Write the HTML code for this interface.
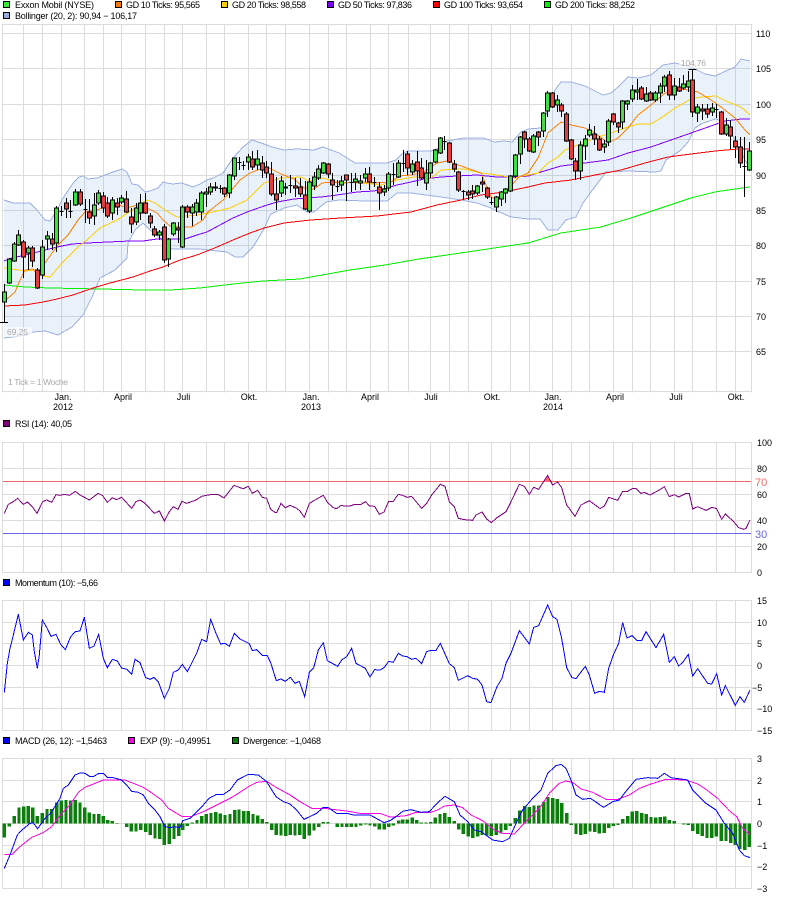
<!DOCTYPE html>
<html><head><meta charset="utf-8"><title>Exxon Mobil Chart</title>
<style>
html,body{margin:0;padding:0;background:#fff}
svg{display:block}
text{font-family:"Liberation Sans",Arial,sans-serif;font-size:9px;fill:#000}
.g{fill:#a8a8a8;font-size:8.5px}
polyline{fill:none}
</style></head><body>
<svg width="792" height="898" viewBox="0 0 792 898" xmlns="http://www.w3.org/2000/svg">
<rect width="792" height="898" fill="#fff"/>
<defs><path id="v" vector-effect="non-scaling-stroke" d="M2.5 0v1M23.5 0v1M42.5 0v1M61.5 0v1M84.5 0v1M103.5 0v1M121.5 0v1M145.5 0v1M164.5 0v1M182.5 0v1M206.5 0v1M224.5 0v1M248.5 0v1M266.5 0v1M285.5 0v1M309.5 0v1M328.5 0v1M346.5 0v1M370.5 0v1M388.5 0v1M408.5 0v1M430.5 0v1M449.5 0v1M468.5 0v1M491.5 0v1M510.5 0v1M529.5 0v1M552.5 0v1M571.5 0v1M589.5 0v1M613.5 0v1M632.5 0v1M650.5 0v1M674.5 0v1M692.5 0v1M716.5 0v1M735.5 0v1M751.5 0v1"/></defs>

<!-- grids -->
<g stroke="#dcdcdc" stroke-width="1" fill="none">
<use href="#v" transform="translate(0,24.5) scale(1,368)"/>
<use href="#v" transform="translate(0,442.5) scale(1,130)"/>
<use href="#v" transform="translate(0,600.5) scale(1,130)"/>
<use href="#v" transform="translate(0,758.5) scale(1,130)"/>
<path d="M2 24.5H752M2 33.5H752M2 68.5H752M2 104.5H752M2 139.5H752M2 175.5H752M2 210.5H752M2 245.5H752M2 281.5H752M2 316.5H752M2 351.5H752M2 391.5H752"/>
<path d="M2 442.5H752M2 468.5H752M2 494.5H752M2 520.5H752M2 546.5H752M2 572.5H752"/>
<path d="M2 600.5H752M2 622.5H752M2 643.5H752M2 665.5H752M2 687.5H752M2 708.5H752M2 730.5H752"/>
<path d="M2 758.5H752M2 780.5H752M2 801.5H752M2 823.5H752M2 845.5H752M2 866.5H752M2 888.5H752"/>
</g>

<!-- Bollinger fill -->
<polygon fill="#6ea0e6" fill-opacity=".15" points="4,200 13,203 23,203 30,203 37,210 45,220 50,221 57,210 62,200 67,192 74,182 79,177 83,176 88,179 97,178 105,175 113,172 122,169 127,172 132,184 138,185 145,192 150,191 158,188 163,182 167,183 173,184 182,183 193,187 200,184 207,180 213,178 223,173 233,158 243,147 252,140 264,144 272,147 284,150 297,149 314,150 323,147 331,150 339,153 347,158 355,163 387,163 396,160 402,154 407,151 431,151 437,149 447,141 464,138 484,138 494,142 504,141 512,142 521,132 528,129 541,128 546,115 551,100 555,90 561,82 571,82 585,86 603,95 611,93 618,87 628,77 638,78 651,75 663,65 675,63 691,67 705,74 715,76 728,70 735,67 741,59 750,61 750,168 745,160 740,150 735,140 730,131 723,121 715,119 701,124 695,128 688,142 681,150 666,160 661,171 655,172 628,171 606,172 600,180 591,192 583,203 576,217 566,220 558,230 548,230 540,219 528,219 511,217 497,211 491,208 477,203 461,200 441,197 411,193 397,193 387,201 364,201 339,200 326,202 314,212 307,212 297,205 284,208 271,214 267,222 264,229 253,247 243,257 235,257 227,252 217,251 200,249 185,249 172,249 167,245 160,238 150,230 143,223 135,230 128,243 127,258 115,270 100,278 92,297 83,315 72,327 58,335 45,331 33,332 27,335 13,337 4,338"/>
<g stroke="#9cb0e0" stroke-width="1" shape-rendering="crispEdges">
<polyline points="4,200 13,203 23,203 30,203 37,210 45,220 50,221 57,210 62,200 67,192 74,182 79,177 83,176 88,179 97,178 105,175 113,172 122,169 127,172 132,184 138,185 145,192 150,191 158,188 163,182 167,183 173,184 182,183 193,187 200,184 207,180 213,178 223,173 233,158 243,147 252,140 264,144 272,147 284,150 297,149 314,150 323,147 331,150 339,153 347,158 355,163 387,163 396,160 402,154 407,151 431,151 437,149 447,141 464,138 484,138 494,142 504,141 512,142 521,132 528,129 541,128 546,115 551,100 555,90 561,82 571,82 585,86 603,95 611,93 618,87 628,77 638,78 651,75 663,65 675,63 691,67 705,74 715,76 728,70 735,67 741,59 750,61"/>
<polyline points="4,338 13,337 27,335 33,332 45,331 58,335 72,327 83,315 92,297 100,278 115,270 127,258 128,243 135,230 143,223 150,230 160,238 167,245 172,249 185,249 200,249 217,251 227,252 235,257 243,257 253,247 264,229 267,222 271,214 284,208 297,205 307,212 314,212 326,202 339,200 364,201 387,201 397,193 411,193 441,197 461,200 477,203 491,208 497,211 511,217 528,219 540,219 548,230 558,230 566,220 576,217 583,203 591,192 600,180 606,172 628,171 655,172 661,171 666,160 681,150 688,142 695,128 701,124 715,119 723,121 730,131 735,140 740,150 745,160 750,168"/>
</g>

<!-- moving averages -->
<g stroke-width="1" shape-rendering="crispEdges">
<polyline stroke="#00f000" points="4,285 25,287 50,288 100,289 143,290 170,290 200,288 233,284 263,281 300,279 350,270 385,265 419,259 447,255 481,250 528,243 561,233 601,227 631,218 661,208 691,198 715,192 735,189 750,187"/>
<polyline stroke="#ff0000" points="4,306 25,305 43,302 57,299 73,295 93,288 110,283 133,277 150,271 163,267 180,260 197,255 217,247 233,240 250,233 264,228 284,223 311,220 341,218 377,216 411,212 437,205 461,200 481,195 504,192 528,187 545,183 571,180 595,175 621,170 645,163 668,157 691,154 715,151 738,149 750,149"/>
<polyline stroke="#8000ff" points="4,261 12,258 30,254 45,250 57,247 72,244 87,243 108,242 130,241 143,241 157,239 167,239 185,239 197,235 207,232 220,225 233,218 247,212 264,206 277,202 294,199 306,198 321,197 337,195 357,192 374,191 387,188 397,185 411,182 424,179 441,177 457,176 477,175 497,177 517,177 528,176 541,172 561,166 585,163 608,160 628,153 651,147 671,140 691,133 708,127 725,121 741,119 750,119"/>
<polyline stroke="#ffcc00" points="4,268 12,269 25,271 35,270 43,276 50,277 62,263 70,255 80,245 87,240 100,228 117,220 132,210 147,200 155,203 165,210 177,217 197,215 213,212 230,208 247,200 264,183 281,178 301,177 309,181 322,178 337,182 361,183 381,185 397,180 414,177 431,178 441,170 464,169 481,173 497,175 514,178 528,175 538,173 548,163 558,157 565,150 573,147 585,142 598,137 611,133 625,128 638,124 651,124 661,118 675,108 691,99 701,97 716,96 728,102 741,107 750,115"/>
<polyline stroke="#ff8000" points="7,299 15,292 20,280 25,270 33,269 38,275 45,263 52,253 58,245 68,235 78,220 85,212 97,210 107,206 117,204 127,208 137,205 147,208 157,213 163,220 170,226 182,227 192,227 203,220 208,212 213,208 223,200 230,192 240,180 250,173 263,168 269,168 281,174 294,179 304,188 314,189 322,183 332,182 344,183 361,182 374,183 391,182 399,176 411,175 424,172 437,163 447,161 464,167 481,173 491,197 497,200 507,190 519,177 528,173 538,158 548,133 555,127 561,122 571,125 585,128 595,133 608,143 618,138 628,128 638,115 651,105 665,93 675,88 688,90 698,92 711,100 721,107 735,118 745,130 750,135"/>
</g>

<!-- wicks + dojis -->
<path stroke="#000" stroke-width="1" fill="none" shape-rendering="crispEdges" d="M4.5 284V322M0 322.5h8M9.5 258V284M14.5 242V262M18.5 230V246M23.5 240V278M28.5 246V270M32.5 246V267M37.5 268V289M42.5 240V279M47.5 231V250M52.5 233V250M56.5 206V252M61.5 206V216M59.5 211.5h4M66.5 198V218M70.5 200V218M68.5 211.5h4M75.5 189V206M80.5 189V206M85.5 199V223M83.5 209.5h4M89.5 199V224M94.5 193V225M98.5 190V205M103.5 192V213M107.5 197V218M112.5 197V220M117.5 198V215M121.5 195V204M126.5 191V213M131.5 208V233M136.5 203V225M140.5 194V220M145.5 193V214M150.5 213V228M154.5 226V237M159.5 230V240M164.5 224V263M168.5 238V267M173.5 222V236M178.5 222V243M182.5 205V248M187.5 205V218M192.5 204V226M196.5 199V216M201.5 191V220M206.5 188V207M210.5 183V195M215.5 182V191M220.5 185V193M218.5 188.5h4M224.5 187V197M229.5 174V198M234.5 158V180M239.5 157V170M237.5 162.5h4M243.5 161V170M241.5 165.5h4M248.5 154V170M252.5 151V170M257.5 150V170M262.5 156V178M266.5 161V178M271.5 162V196M276.5 177V210M281.5 176V197M285.5 183V195M290.5 175V193M288.5 185.5h4M295.5 178V197M300.5 178V197M305.5 181V210M309.5 178V213M314.5 172V190M318.5 165V180M323.5 162V174M328.5 163V178M332.5 173V200M337.5 180V192M335.5 186.5h4M341.5 176V191M346.5 175V201M351.5 173V192M349.5 182.5h4M355.5 173V190M360.5 175V190M365.5 168V182M369.5 167V190M374.5 177V187M372.5 182.5h4M379.5 182V210M384.5 185V196M388.5 172V191M393.5 163V185M391.5 174.5h4M398.5 160V178M403.5 150V172M401.5 163.5h4M407.5 151V175M412.5 160V175M417.5 151V186M421.5 158V180M426.5 160V190M430.5 162V178M435.5 149V163M440.5 137V154M444.5 136V150M442.5 141.5h4M449.5 142V163M454.5 160V172M458.5 171V192M463.5 190V200M461.5 191.5h4M468.5 190V200M472.5 185V199M477.5 185V195M482.5 177V192M487.5 187V199M491.5 197V205M489.5 202.5h4M496.5 196V212M501.5 191V206M505.5 188V203M510.5 175V192M515.5 154V178M520.5 136V164M524.5 131V148M529.5 137V152M533.5 134V153M538.5 131V146M543.5 112V137M547.5 91V117M552.5 92V108M557.5 95V112M561.5 103V117M566.5 112V142M571.5 139V160M575.5 158V180M580.5 141V180M585.5 135V160M589.5 124V137M594.5 126V145M599.5 136V151M604.5 140V153M608.5 119V146M613.5 113V125M618.5 122V133M622.5 100V129M627.5 100V110M632.5 85V102M637.5 79V100M641.5 86V100M646.5 87V102M650.5 91V101M655.5 91V102M660.5 83V103M664.5 75V92M669.5 71V100M674.5 78V100M679.5 78V92M683.5 75V90M688.5 71V92M692.5 69V117M688.5 69.5h8M697.5 104V122M702.5 104V120M707.5 104V118M712.5 103V116M716.5 104V118M714.5 109.5h4M721.5 111V135M726.5 118V136M730.5 120V149M735.5 136V158M740.5 137V168M744.5 137V197M742.5 166.5h4M749.5 142V171"/>

<!-- green bodies -->
<path fill="#3de03d" stroke="#000" stroke-width="1" shape-rendering="crispEdges" d="M2.5 292h4V302h-4zM7.5 259h4V283h-4zM12.5 244h4V261h-4zM16.5 235h4V245h-4zM26.5 248h4V253h-4zM40.5 247h4V275h-4zM45.5 236h4V239h-4zM54.5 208h4V243h-4zM73.5 192h4V205h-4zM92.5 205h4V216h-4zM96.5 193h4V203h-4zM110.5 200h4V213h-4zM119.5 198h4V202h-4zM134.5 208h4V222h-4zM138.5 203h4V213h-4zM157.5 232h4V235h-4zM166.5 239h4V259h-4zM171.5 223h4V234h-4zM180.5 207h4V247h-4zM190.5 207h4V213h-4zM194.5 203h4V212h-4zM199.5 193h4V212h-4zM204.5 192h4V194h-4zM208.5 187h4V192h-4zM213.5 187h4V188h-4zM227.5 175h4V193h-4zM232.5 158h4V176h-4zM246.5 157h4V162h-4zM255.5 159h4V165h-4zM279.5 181h4V193h-4zM307.5 182h4V211h-4zM312.5 177h4V186h-4zM316.5 169h4V178h-4zM321.5 163h4V173h-4zM339.5 181h4V185h-4zM353.5 179h4V182h-4zM358.5 181h4V183h-4zM363.5 174h4V178h-4zM382.5 189h4V192h-4zM386.5 174h4V188h-4zM396.5 163h4V177h-4zM410.5 164h4V172h-4zM424.5 173h4V183h-4zM428.5 163h4V173h-4zM433.5 150h4V162h-4zM438.5 138h4V153h-4zM475.5 186h4V193h-4zM494.5 197h4V207h-4zM499.5 192h4V199h-4zM503.5 189h4V193h-4zM508.5 176h4V191h-4zM513.5 155h4V176h-4zM518.5 137h4V154h-4zM531.5 136h4V152h-4zM541.5 113h4V131h-4zM545.5 93h4V111h-4zM555.5 100h4V105h-4zM578.5 145h4V171h-4zM583.5 139h4V146h-4zM587.5 130h4V135h-4zM602.5 144h4V147h-4zM606.5 121h4V142h-4zM620.5 101h4V122h-4zM625.5 101h4V104h-4zM630.5 90h4V99h-4zM635.5 90h4V92h-4zM644.5 94h4V101h-4zM653.5 93h4V100h-4zM658.5 86h4V93h-4zM662.5 77h4V86h-4zM672.5 86h4V95h-4zM681.5 84h4V88h-4zM686.5 81h4V87h-4zM695.5 107h4V113h-4zM710.5 108h4V112h-4zM724.5 125h4V134h-4zM747.5 151h4V170h-4z"/>

<!-- red bodies -->
<path fill="#e83c3c" stroke="#000" stroke-width="1" shape-rendering="crispEdges" d="M21.5 242h4V257h-4zM30.5 248h4V261h-4zM35.5 270h4V288h-4zM50.5 239h4V244h-4zM64.5 203h4V209h-4zM78.5 192h4V204h-4zM87.5 212h4V218h-4zM101.5 196h4V208h-4zM105.5 203h4V216h-4zM115.5 203h4V207h-4zM124.5 199h4V212h-4zM129.5 217h4V224h-4zM143.5 203h4V213h-4zM148.5 216h4V223h-4zM152.5 229h4V235h-4zM162.5 227h4V260h-4zM176.5 228h4V230h-4zM185.5 207h4V212h-4zM222.5 188h4V194h-4zM250.5 159h4V167h-4zM260.5 163h4V170h-4zM264.5 167h4V173h-4zM269.5 174h4V194h-4zM274.5 194h4V200h-4zM283.5 187h4V188h-4zM293.5 186h4V188h-4zM298.5 187h4V194h-4zM303.5 195h4V209h-4zM326.5 164h4V174h-4zM330.5 180h4V185h-4zM344.5 175h4V180h-4zM367.5 174h4V182h-4zM377.5 187h4V193h-4zM405.5 154h4V168h-4zM415.5 162h4V171h-4zM419.5 168h4V178h-4zM447.5 143h4V162h-4zM452.5 164h4V169h-4zM456.5 172h4V190h-4zM466.5 192h4V195h-4zM470.5 191h4V194h-4zM480.5 182h4V184h-4zM485.5 188h4V197h-4zM522.5 132h4V139h-4zM527.5 139h4V151h-4zM536.5 132h4V137h-4zM550.5 93h4V107h-4zM559.5 105h4V111h-4zM564.5 114h4V141h-4zM569.5 140h4V159h-4zM573.5 161h4V171h-4zM592.5 134h4V139h-4zM597.5 139h4V150h-4zM611.5 114h4V122h-4zM616.5 123h4V127h-4zM639.5 88h4V99h-4zM648.5 93h4V100h-4zM667.5 75h4V95h-4zM677.5 87h4V91h-4zM690.5 80h4V112h-4zM700.5 109h4V111h-4zM705.5 109h4V114h-4zM719.5 112h4V134h-4zM728.5 127h4V136h-4zM733.5 141h4V147h-4zM738.5 147h4V163h-4z"/>

<!-- RSI -->
<g shape-rendering="crispEdges" stroke-width="1">
<path d="M3 481.5H751" stroke="#f06868"/>
<path d="M3 533.5H751" stroke="#6868e8"/>
</g>
<polygon points="544.5,481.5 547.7,475.5 551,481.5" fill="#ff6666"/>
<g transform="translate(0,410) scale(.33333)" stroke="#800080" stroke-width="3" shape-rendering="crispEdges">
<polyline points="13,310 25,283 40,275 53,265 70,283 83,276 97,290 111,310 128,275 140,270 155,277 168,254 180,256 193,253 208,256 226,244 240,255 268,270 295,250 308,257 322,277 337,263 350,269 365,262 395,295 408,275 420,270 435,280 463,310 478,303 493,333 508,305 520,290 534,298 546,274 560,280 588,270 605,259 625,255 640,253 655,254 672,264 702,226 720,233 730,236 745,229 757,250 773,241 787,262 800,265 812,298 825,307 830,308 843,280 856,293 870,286 890,295 900,303 913,322 928,280 945,270 970,256 983,278 1000,293 1010,296 1022,287 1050,288 1065,283 1083,283 1097,275 1108,288 1124,289 1138,313 1152,306 1166,274 1180,274 1188,262"/>
</g>
<g transform="translate(396,410) scale(.33333)" stroke="#800080" stroke-width="3" shape-rendering="crispEdges">
<polyline points="0,262 7,253 20,256 33,262 47,259 77,295 92,280 107,255 133,223 147,229 160,275 175,290 187,325 205,329 230,331 240,315 258,306 272,327 286,338 303,323 330,305 345,275 370,223 385,229 400,253 413,232 428,238 455,196 470,225 485,216 497,233 512,285 537,319 555,285 580,272 612,296 625,288 638,262 665,271 680,244 695,244 710,235 720,235 735,250 745,247 762,255 790,240 805,230 820,260 835,254 848,261 870,250 880,250 890,297 905,290 930,301 948,292 962,296 977,328 988,312 1012,334 1028,353 1043,358 1050,355 1062,330"/>
</g>

<!-- Momentum -->
<g transform="translate(0,575) scale(.33333)" stroke="#0000ff" stroke-width="3" shape-rendering="crispEdges">
<polyline points="13,352 22,265 30,220 40,180 55,118 70,195 85,172 97,180 103,230 112,280 118,240 127,135 140,157 153,184 168,178 182,208 196,224 212,185 226,170 240,168 253,127 268,220 282,213 296,178 310,250 322,278 337,253 352,258 365,279 381,283 395,298 405,253 420,263 437,308 450,313 462,307 475,320 493,370 508,340 520,292 535,285 547,268 562,290 590,235 605,193 620,200 632,133 648,175 662,207 675,205 688,214 703,175 720,192 748,206 757,227 770,224 787,241 802,242 812,263 829,317 842,312 856,319 871,307 885,325 898,319 914,365 928,292 941,279 955,225 970,203 982,257 1013,274 1025,255 1040,245 1055,220 1068,265 1096,280 1110,306 1124,284 1140,285 1152,278 1166,259 1180,262 1188,247"/>
</g>
<g transform="translate(396,575) scale(.33333)" stroke="#0000ff" stroke-width="3" shape-rendering="crispEdges">
<polyline points="0,247 7,235 20,243 33,245 47,253 60,250 77,266 92,230 105,226 120,226 133,205 160,266 175,278 187,316 215,302 230,310 245,313 258,330 272,380 285,383 303,335 318,310 330,265 345,235 370,167 400,207 413,157 428,152 455,90 470,125 483,133 497,190 512,278 528,308 540,311 568,274 580,300 596,355 610,349 625,352 638,280 652,240 668,205 680,143 693,189 708,182 722,196 737,196 750,170 780,218 803,178 820,262 835,245 848,273 862,260 877,238 890,303 905,281 935,325 947,327 962,296 977,360 988,332 1018,391 1032,365 1045,382 1062,345"/>
</g>

<!-- MACD bars -->
<g transform="translate(0,730) scale(.33333)" stroke="#0a800a" stroke-width="9.6" shape-rendering="crispEdges" fill="none">
<path d="M13 280V323M28 280V290M43 280V258M57 280V233M71 280V230M85 280V228M98 280V233M112 280V258M127 280V249M141 280V237M155 280V237M170 280V218M184 280V212M198 280V210M212 280V212M226 280V210M240 280V218M254 280V232M268 280V248M282 280V252M296 280V252M310 280V258M323 280V270M337 280V273M351 280V279M365 280V281M380 280V291M394 280V305M408 280V305M422 280V300M437 280V306M451 280V315M465 280V325M479 280V327M493 280V345M508 280V342M522 280V327M536 280V318M548 280V300M562 280V288M577 280V278M591 280V270M605 280V258M619 280V252M633 280V249M647 280V246M661 280V250M675 280V255M690 280V252M704 280V240M717 280V238M731 280V243M745 280V243M759 280V252M773 280V256M787 280V267M800 280V276M815 280V300M829 280V315M843 280V316M857 280V318M871 280V315M885 280V316M899 280V315M913 280V327M928 280V316M942 280V302M956 280V291M970 280V276M984 280V276M998 280V281M1012 280V291M1026 280V291M1040 280V291M1054 280V291M1068 280V291M1082 280V287M1097 280V284M1110 280V287M1124 280V289M1138 280V298M1153 280V298M1166 280V291M1180 280V287"/>
</g>
<g transform="translate(396,730) scale(.33333)" stroke="#0a800a" stroke-width="9.6" shape-rendering="crispEdges" fill="none">
<path d="M8 280V272M20 280V268M34 280V268M49 280V263M62 280V270M76 280V277M90 280V278M104 280V276M118 280V263M132 280V252M146 280V249M160 280V261M175 280V273M188 280V298M202 280V312M217 280V320M230 280V324M245 280V320M258 280V315M272 280V316M286 280V318M301 280V315M315 280V310M329 280V300M343 280V288M358 280V264M371 280V241M386 280V228M400 280V231M414 280V226M428 280V226M443 280V216M456 280V201M470 280V204M484 280V207M497 280V219M512 280V249M526 280V285M540 280V312M554 280V315M568 280V312M582 280V305M596 280V306M610 280V311M625 280V309M638 280V294M652 280V288M666 280V285M680 280V267M695 280V258M709 280V245M722 280V243M737 280V249M751 280V252M765 280V261M779 280V263M793 280V261M806 280V259M820 280V270M835 280V273M849 280V281M863 280V283M877 280V285M890 280V303M905 280V312M919 280V318M933 280V324M947 280V324M961 280V320M976 280V333M990 280V333M1004 280V339M1018 280V345M1032 280V357M1046 280V360M1060 280V351"/>
</g>
<!-- MACD lines -->
<g transform="translate(0,730) scale(.33333)" stroke-width="3" shape-rendering="crispEdges">
<polyline stroke="#ff00e6" points="13,373 37,373 60,350 95,322 130,308 155,290 185,250 210,225 235,187 255,172 285,160 310,150 340,150 375,150 395,158 430,172 450,185 485,210 505,235 530,250 545,259 575,259 610,245 650,225 690,205 715,190 745,170 770,157 800,154 830,173 870,195 900,215 935,235 980,236 1040,243 1080,250 1140,250 1170,261 1188,260"/>
<polyline stroke="#0000ff" points="13,415 30,375 52,315 66,300 90,280 100,279 113,296 135,265 152,250 180,205 190,175 205,165 225,135 240,129 255,130 270,140 280,140 295,131 310,130 322,142 340,143 365,150 380,165 395,184 415,187 430,195 445,220 465,240 480,260 495,290 510,293 525,290 540,293 548,272 570,265 590,245 610,225 627,205 650,193 670,193 690,180 712,150 745,133 775,135 800,155 828,200 850,215 870,222 890,240 912,268 950,250 970,232 985,233 1010,250 1040,250 1060,255 1110,255 1125,263 1152,278 1170,272 1188,260"/>
</g>
<g transform="translate(396,730) scale(.33333)" stroke-width="3" shape-rendering="crispEdges">
<polyline stroke="#ff00e6" points="0,260 30,257 60,247 105,247 125,240 145,228 175,225 200,233 225,255 260,272 295,300 320,310 355,312 375,290 400,265 430,235 460,190 490,160 510,153 530,157 555,177 590,187 630,208 665,208 700,195 730,175 765,162 810,148 870,150 905,162 930,178 965,205 1000,242 1022,260 1040,295 1062,315"/>
<polyline stroke="#0000ff" points="0,260 20,244 45,239 75,247 100,245 125,218 147,199 175,215 192,255 215,275 235,300 255,305 290,330 320,335 340,325 360,280 380,240 410,205 435,180 455,130 480,107 495,103 510,115 525,150 540,195 560,208 583,205 623,232 650,215 670,210 685,190 720,148 755,143 785,145 805,130 825,143 875,150 890,180 930,220 960,240 985,280 1010,310 1030,360 1045,377 1062,383"/>
</g>

<!-- gray annotations -->
<rect x="5" y="327" width="27" height="10" fill="#fff" fill-opacity=".6"/>
<text class="g" x="7" y="335" textLength="21">69,25</text>
<rect x="679" y="58" width="29" height="10" fill="#fff" fill-opacity=".6"/>
<text class="g" x="681" y="66" textLength="25">104,76</text>
<text class="g" x="8" y="385" textLength="60">1 Tick = 1 Woche</text>

<!-- legends -->
<g stroke="#000" stroke-width="1">
<rect x="3.5" y="1.5" width="6" height="6" fill="#33ee33"/>
<rect x="115.5" y="1.5" width="6" height="6" fill="#ff7700"/>
<rect x="221.5" y="1.5" width="6" height="6" fill="#ffcc00"/>
<rect x="327.5" y="1.5" width="6" height="6" fill="#7700ee"/>
<rect x="433.5" y="1.5" width="6" height="6" fill="#ff0000"/>
<rect x="544.5" y="1.5" width="6" height="6" fill="#00ee00"/>
<rect x="3.5" y="12.5" width="6" height="6" fill="#99aadd"/>
<rect x="3.5" y="420.5" width="6" height="6" fill="#800080"/>
<rect x="3.5" y="579.5" width="6" height="6" fill="#0000ff"/>
<rect x="3.5" y="737.5" width="6" height="6" fill="#0000ff"/>
<rect x="128.5" y="737.5" width="6" height="6" fill="#ff00e6"/>
<rect x="232.5" y="737.5" width="6" height="6" fill="#008000"/>
</g>
<text x="15" y="8" textLength="79">Exxon Mobil (NYSE)</text>
<text x="126" y="8" textLength="74">GD 10 Ticks: 95,565</text>
<text x="232" y="8" textLength="74">GD 20 Ticks: 98,558</text>
<text x="338" y="8" textLength="74">GD 50 Ticks: 97,836</text>
<text x="444" y="8" textLength="79">GD 100 Ticks: 93,654</text>
<text x="555" y="8" textLength="80">GD 200 Ticks: 88,252</text>
<text x="15" y="19" textLength="122">Bollinger (20, 2): 90,94 − 106,17</text>
<text x="15" y="427" textLength="57">RSI (14): 40,05</text>
<text x="15" y="586" textLength="83">Momentum (10): −5,66</text>
<text x="15" y="744" textLength="92">MACD (26, 12): −1,5463</text>
<text x="140" y="744" textLength="71">EXP (9): −0,49951</text>
<text x="243" y="744" textLength="78">Divergence: −1,0468</text>

<!-- main y axis -->
<text x="756" y="37">110</text>
<text x="756" y="72">105</text>
<text x="756" y="108">100</text>
<text x="756" y="143">95</text>
<text x="756" y="179">90</text>
<text x="756" y="214">85</text>
<text x="756" y="249">80</text>
<text x="756" y="285">75</text>
<text x="756" y="320">70</text>
<text x="756" y="355">65</text>

<!-- x axis -->
<g text-anchor="middle">
<text x="63" y="400">Jan.</text><text x="63" y="410">2012</text>
<text x="123" y="400">April</text>
<text x="183.5" y="400">Juli</text>
<text x="249" y="400">Okt.</text>
<text x="311" y="400">Jan.</text><text x="311" y="410">2013</text>
<text x="370" y="400">April</text>
<text x="431" y="400">Juli</text>
<text x="492" y="400">Okt.</text>
<text x="553" y="400">Jan.</text><text x="553" y="410">2014</text>
<text x="615" y="400">April</text>
<text x="676" y="400">Juli</text>
<text x="736" y="400">Okt.</text>
</g>

<!-- RSI axis -->
<text x="757" y="446">100</text>
<text x="757" y="472">80</text>
<text x="757" y="498">60</text>
<text x="757" y="524">40</text>
<text x="757" y="550">20</text>
<text x="757" y="576">0</text>
<text x="755" y="486" style="font-size:11px;fill:#ff6666">70</text>
<text x="755" y="538" style="font-size:11px;fill:#6666ff">30</text>

<!-- Momentum axis -->
<text x="757" y="604">15</text>
<text x="757" y="626">10</text>
<text x="757" y="647">5</text>
<text x="757" y="669">0</text>
<text x="752" y="691">−5</text>
<text x="757" y="712">−10</text>
<text x="757" y="734">−15</text>

<!-- MACD axis -->
<text x="757" y="762">3</text>
<text x="757" y="784">2</text>
<text x="757" y="805">1</text>
<text x="757" y="827">0</text>
<text x="757" y="849">−1</text>
<text x="757" y="870">−2</text>
<text x="757" y="892">−3</text>
</svg>
</body></html>
